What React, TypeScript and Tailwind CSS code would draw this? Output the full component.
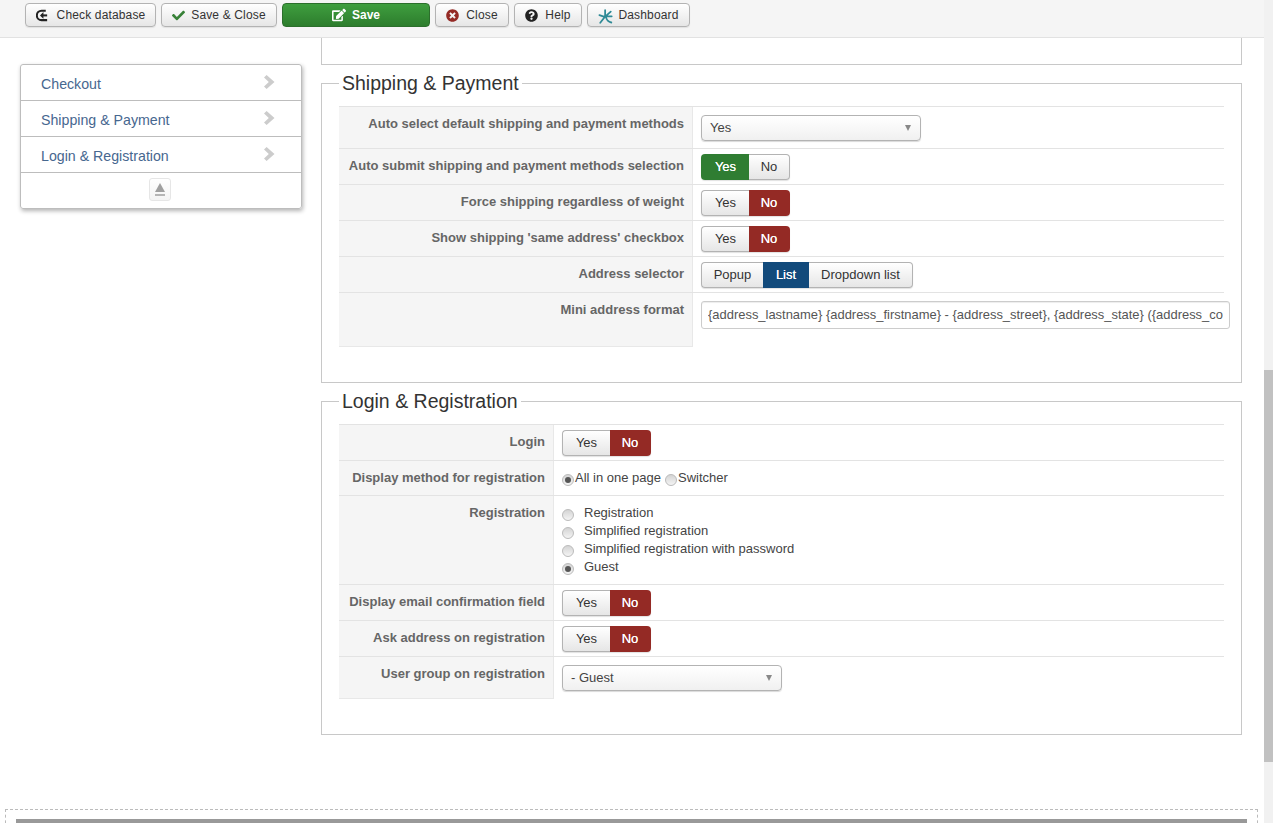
import { FaCheck, FaEdit, FaQuestionCircle, FaTimesCircle } from "react-icons/fa";
import type { ReactNode } from "react";

function ToolbarButton({ icon, label, className }: { icon: ReactNode; label: string; className: string }) {
  return (
    <button className={`flex h-[24px] items-center justify-center rounded-[4px] border border-[#b3b3b3] bg-gradient-to-b from-white to-[#e6e6e6] text-[12px] tracking-[0.15px] text-[#333] shadow-[0_1px_1px_rgba(0,0,0,0.08)] ${className}`}>
      {icon}
      <span>{label}</span>
    </button>
  );
}

function Toggle({ options, active, color }: { options: { label: string; width: string }[]; active: string; color: string }) {
  return (
    <div className="inline-flex h-[26px] rounded-[4px] text-[13px] align-top shadow-[0_1px_1px_rgba(0,0,0,0.12)]">
      {options.map((o, i) => {
        const first = i === 0;
        const last = i === options.length - 1;
        const on = o.label === active;
        return (
          <div
            key={o.label}
            className={`flex items-center justify-center ${o.width} ${first ? "rounded-l-[4px] border-l" : ""} ${last ? "rounded-r-[4px] border-r" : ""} ${on ? `${color} border-transparent text-white [text-shadow:0_0_0.5px_#fff]` : "border-y border-[#b3b3b3] bg-gradient-to-b from-white to-[#e6e6e6] text-[#333]"}`}
          >
            {o.label}
          </div>
        );
      })}
    </div>
  );
}

const yesNo = [
  { label: "Yes", width: "w-[48px]" },
  { label: "No", width: "w-[41px]" },
];

function SelectBox({ value }: { value: string }) {
  return (
    <div className="flex h-[26px] w-[220px] items-center justify-between rounded-[4px] border border-[#b3b3b3] bg-gradient-to-b from-white via-[#f8f8f8] to-[#f0f0f0] pl-[8px] pr-[9px] text-[13px] text-[#444] shadow-[0_1px_1px_rgba(0,0,0,0.15)]">
      <span>{value}</span>
      <span className="h-0 w-0 border-x-[3.5px] border-t-[6px] border-x-transparent border-t-[#888]" />
    </div>
  );
}

function Radio({ checked }: { checked?: boolean }) {
  return (
    <span className="mt-[4px] flex h-[12px] w-[12px] shrink-0 items-center justify-center rounded-full border border-[#bbb] bg-gradient-to-b from-[#d4d4d4] to-[#f4f4f4]">
      {checked && <span className="h-[6px] w-[6px] rounded-full bg-[#555]" />}
    </span>
  );
}

function Row({ label, labelWidth, className, last, children }: { label: string; labelWidth: string; className: string; last?: boolean; children: ReactNode }) {
  return (
    <div className="flex border-t border-[#e3e3e3]">
      <div className={`${labelWidth} shrink-0 border-r border-[#e8e8e8] bg-[#f5f5f5] pr-[8px] pt-[8px] text-right text-[13px] leading-[18px] font-bold text-[#666] ${last ? "border-b" : ""}`}>
        {label}
      </div>
      <div className={`min-w-0 flex-1 pl-[8px] ${className}`}>{children}</div>
    </div>
  );
}

function Section({ title, children }: { title: string; children: ReactNode }) {
  return (
    <fieldset className="mt-[6px] min-w-0 border border-[#c8c8c8] px-[17px] pb-[35px]">
      <legend className="px-[3px] text-[19.5px] leading-[24px] text-[#333]">{title}</legend>
      <div className="pt-[11px]">{children}</div>
    </fieldset>
  );
}

export default function App() {
  const wide = "w-[354px]";
  const narrow = "w-[215px]";

  return (
    <div className="flex h-[823px] overflow-hidden bg-white font-['Liberation_Sans',Arial,sans-serif]">
      <div className="min-w-0 flex-1">
        {/* Toolbar */}
        <div className="flex h-[38px] gap-[5px] border-b border-[#e2e2e2] bg-[#f5f5f5] pl-[25px] pt-[3px]">
          <ToolbarButton
            className="w-[131px] gap-[8px]"
            label="Check database"
            icon={
              <svg viewBox="0 0 14 14" className="h-[13px] w-[13px] text-[#222]" fill="none" stroke="currentColor" strokeWidth="2.2">
                <path d="M10.5 1.8H6a4.9 4.9 0 0 0 0 10.2h6" />
                <path d="M6 6.9h6" />
                <path d="M8 3.2 4.3 6.9 8 10.6z" fill="currentColor" stroke="none" />
              </svg>
            }
          />
          <ToolbarButton className="w-[116px] gap-[6px]" label="Save & Close" icon={<FaCheck className="text-[13px] text-[#378137]" />} />
          <button className="flex h-[24px] w-[148px] items-center justify-center gap-[6px] rounded-[4px] border border-[#2c6f2c] bg-gradient-to-b from-[#3f9e3f] to-[#2d7d2d] text-[12px] font-bold text-white">
            <FaEdit className="text-[14px]" />
            <span>Save</span>
          </button>
          <ToolbarButton className="w-[74px] gap-[7px]" label="Close" icon={<FaTimesCircle className="text-[13px] text-[#942a25]" />} />
          <ToolbarButton className="w-[68px] gap-[7px]" label="Help" icon={<FaQuestionCircle className="text-[13px] text-[#222]" />} />
          <ToolbarButton
            className="w-[103px] gap-[5px]"
            label="Dashboard"
            icon={
              <svg viewBox="0 0 16 16" className="mt-[3px] h-[15px] w-[15px] text-[#2f8a96]" fill="none" stroke="currentColor" strokeWidth="1.9" strokeLinecap="round">
                <path d="M7.6 8V1.2M1.5 6.5l5.5 1.8M13.6 2.8 8 7.8h6.6M7.6 8 2.4 14.6M8.4 8.2c.6 3 1.6 5.6 5.8 6.2" />
              </svg>
            }
          />
        </div>

        <div className="flex pl-[20px]">
          {/* Sidebar */}
          <div className="mr-[19px] mt-[26px] h-[145px] w-[282px] shrink-0 rounded-[3px] border border-[#bdbdbd] shadow-[1px_2px_4px_rgba(0,0,0,0.3)]">
            {["Checkout", "Shipping & Payment", "Login & Registration"].map((item) => (
              <div key={item} className="flex h-[36px] items-center justify-between border-b border-[#bdbdbd] pl-[20px] pr-[26px] text-[14.2px] text-[#47678f]">
                <span className="pt-[5px]">{item}</span>
                <svg viewBox="0 0 11 14" className="mb-[2px] h-[14px] w-[11px] text-[#ccc]" fill="currentColor">
                  <path d="M0 2.6 2.6 0l7.9 7-7.9 7L0 11.4 4.8 7z" />
                </svg>
              </div>
            ))}
            <div className="flex justify-center pr-[2px] pt-[5px]">
              <div className="flex h-[23px] w-[22px] flex-col items-center justify-center gap-[2px] rounded-[3px] border border-[#e6e6e6] bg-gradient-to-b from-white to-[#f4f4f4]">
                <span className="h-0 w-0 border-x-[5px] border-b-[9px] border-x-transparent border-b-[#a0a0a0]" />
                <span className="h-[2px] w-[10px] bg-[#b5b5b5]" />
              </div>
            </div>
          </div>

          {/* Settings */}
          <div className="w-[921px] shrink-0">
            <div className="h-[27px] border-x border-b border-[#c8c8c8]" />

            <Section title="Shipping & Payment">
              <Row label="Auto select default shipping and payment methods" labelWidth={wide} className="pb-[7px] pt-[8px]">
                <SelectBox value="Yes" />
              </Row>
              <Row label="Auto submit shipping and payment methods selection" labelWidth={wide} className="pb-[4px] pt-[5px]">
                <Toggle options={yesNo} active="Yes" color="bg-[#2f7d32]" />
              </Row>
              <Row label="Force shipping regardless of weight" labelWidth={wide} className="pb-[4px] pt-[5px]">
                <Toggle options={yesNo} active="No" color="bg-[#942a25]" />
              </Row>
              <Row label="Show shipping 'same address' checkbox" labelWidth={wide} className="pb-[4px] pt-[5px]">
                <Toggle options={yesNo} active="No" color="bg-[#942a25]" />
              </Row>
              <Row label="Address selector" labelWidth={wide} className="pb-[4px] pt-[5px]">
                <Toggle
                  options={[
                    { label: "Popup", width: "w-[62px]" },
                    { label: "List", width: "w-[46px]" },
                    { label: "Dropdown list", width: "w-[104px]" },
                  ]}
                  active="List"
                  color="bg-[#124a7b]"
                />
              </Row>
              <Row label="Mini address format" labelWidth={wide} className="h-[54px] pt-[8px]" last>
                <input
                  readOnly
                  value="{address_lastname} {address_firstname} - {address_street}, {address_state} ({address_country})"
                  className="h-[28px] w-[529px] rounded-[3px] border border-[#ccc] px-[6px] pb-[2px] text-[12.95px] text-[#555] shadow-[inset_0_1px_1px_rgba(0,0,0,0.075)]"
                />
              </Row>
            </Section>

            <Section title="Login & Registration">
              <Row label="Login" labelWidth={narrow} className="pb-[4px] pt-[5px]">
                <Toggle options={yesNo} active="No" color="bg-[#942a25]" />
              </Row>
              <Row label="Display method for registration" labelWidth={narrow} className="h-[34px]">
                <div className="flex items-center pt-[8px] text-[13px] leading-[18px] text-[#444]">
                  <Radio checked />
                  <span className="mr-[4px] ml-[1px]">All in one page</span>
                  <Radio />
                  <span className="ml-[1px]">Switcher</span>
                </div>
              </Row>
              <Row label="Registration" labelWidth={narrow} className="pb-[8px] pt-[8px]">
                {[
                  { label: "Registration" },
                  { label: "Simplified registration" },
                  { label: "Simplified registration with password" },
                  { label: "Guest", checked: true },
                ].map((r) => (
                  <div key={r.label} className="flex h-[18px] items-center gap-[10px] text-[13px] text-[#444]">
                    <Radio checked={r.checked} />
                    <span>{r.label}</span>
                  </div>
                ))}
              </Row>
              <Row label="Display email confirmation field" labelWidth={narrow} className="pb-[4px] pt-[5px]">
                <Toggle options={yesNo} active="No" color="bg-[#942a25]" />
              </Row>
              <Row label="Ask address on registration" labelWidth={narrow} className="pb-[4px] pt-[5px]">
                <Toggle options={yesNo} active="No" color="bg-[#942a25]" />
              </Row>
              <Row label="User group on registration" labelWidth={narrow} className="pb-[8px] pt-[8px]" last>
                <SelectBox value="- Guest" />
              </Row>
            </Section>
          </div>
        </div>

        {/* Footer */}
        <div className="ml-[5px] mr-[6px] mt-[74px] border-x border-t border-dashed border-[#bbb] px-[10px] pt-[9px]">
          <div className="h-[10px] bg-[#999]" />
        </div>
      </div>

      {/* Browser scrollbar */}
      <div className="w-[9px] shrink-0 bg-[#f1f1f1] pt-[370px]">
        <div className="h-[392px] bg-[#c1c1c1]" />
      </div>
    </div>
  );
}
